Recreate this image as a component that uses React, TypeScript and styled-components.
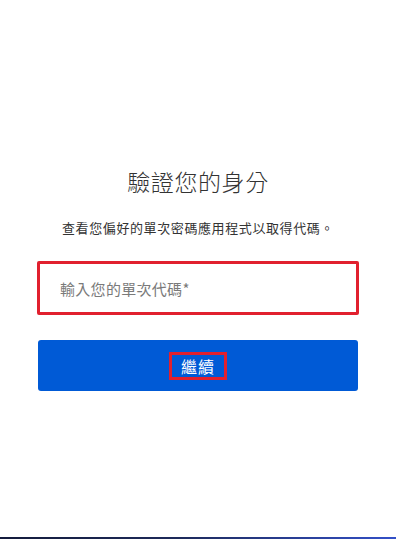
import styled, { createGlobalStyle } from 'styled-components'

const GlobalStyle = createGlobalStyle`
    html, body {
        margin: 0;
        padding: 0;
        background: #ffffff;
    }
    body {
        font-family: "Noto Sans CJK TC", "Noto Sans", Roboto, sans-serif;
        color: #333333;
    }
`

export default function App(){
    return (
        <>
            <GlobalStyle />
            <Page>
                <Main>
                    <Title>驗證您的身分</Title>
                    <Subtitle>查看您偏好的單次密碼應用程式以取得代碼。</Subtitle>
                    <Highlight>
                        <CodeInput placeholder="輸入您的單次代碼*" />
                    </Highlight>
                    <ContinueButton>
                        <ButtonLabel>繼續</ButtonLabel>
                    </ContinueButton>
                </Main>
                <BottomBar />
            </Page>
        </>
    )
}

const Page = styled.div`
    min-height: 100vh;
    display: flex;
    flex-direction: column;
`

const Main = styled.div`
    flex: 1;
    width: 322px;
    margin: 0 auto;
    padding-top: 164px;
    display: flex;
    flex-direction: column;
    align-items: center;
`

const Title = styled.h1`
    margin: 0;
    font-size: 23px;
    font-weight: 300;
    line-height: 34px;
    color: #333333;
    letter-spacing: 0.6px;
`

const Subtitle = styled.p`
    margin: 20px 0 0 0;
    font-size: 13px;
    line-height: 20px;
    color: #333333;
    letter-spacing: 0.6px;
`

const Highlight = styled.div`
    margin-top: 23px;
    width: 322px;
    box-sizing: border-box;
    border: 3px solid #e1202e;
    border-radius: 2px;
`

const CodeInput = styled.input`
    display: block;
    width: 100%;
    height: 48px;
    box-sizing: border-box;
    border: none;
    outline: none;
    padding: 0 20px;
    font-family: "Noto Sans CJK TC", "Noto Sans", sans-serif;
    font-size: 15px;
    letter-spacing: 0.3px;
    color: #333333;
    background: #ffffff;

    &::placeholder {
        color: #7a7a7a;
    }
`

const ContinueButton = styled.button`
    margin-top: 25px;
    width: 320px;
    height: 51px;
    border: none;
    border-radius: 3px;
    background: #005ad6;
    display: flex;
    align-items: center;
    justify-content: center;
    cursor: pointer;
`

const ButtonLabel = styled.span`
    border: 3px solid #e1202e;
    padding: 0 9px;
    font-family: "Noto Sans CJK TC", "Noto Sans", sans-serif;
    font-size: 16px;
    line-height: 22px;
    color: #ffffff;
    letter-spacing: 1px;
`

const BottomBar = styled.div`
    height: 2px;
    background: linear-gradient(90deg, #141c3c 0%, #1d2a5a 45%, #3350c8 100%);
`
